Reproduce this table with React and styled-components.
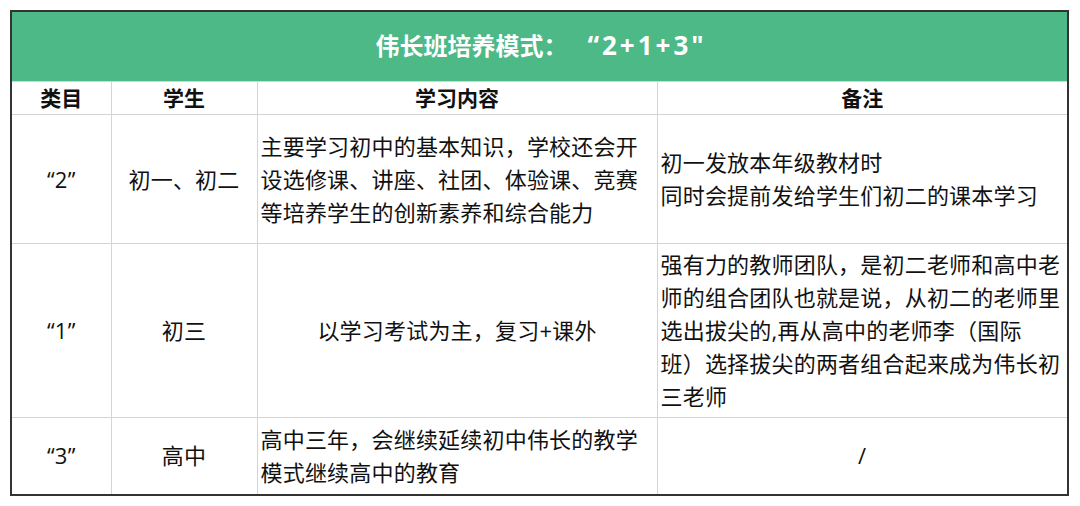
import React from 'react';
import styled, { createGlobalStyle } from 'styled-components';

const GlobalStyle = createGlobalStyle`
  html, body {
    margin: 0;
    padding: 0;
    background: #ffffff;
  }
`;

const Page = styled.div`
  width: 1080px;
  height: 506px;
  padding: 10px 0 0 10px;
  box-sizing: border-box;
  font-family: "Open Sans", "Noto Sans CJK SC", sans-serif;
  color: #111;
`;

const Table = styled.table`
  width: 1059px;
  border-collapse: collapse;
  table-layout: fixed;
  border: 2px solid #333;
`;

const TitleCell = styled.th`
  height: 65px;
  background: #4cb987;
  color: #ffffff;
  font-size: 24px;
  font-weight: 700;
  text-align: center;
  vertical-align: middle;
  padding: 0 0 4px 0;
  border-bottom: 1px solid #d4d4d4;
`;

const TitleNumbers = styled.span`
  font-size: 26px;
  letter-spacing: 3px;
  margin-left: 20px;
  margin-right: -3px;
`;

const HeadCell = styled.th`
  height: 32px;
  font-size: 21px;
  font-weight: 700;
  text-align: center;
  vertical-align: middle;
  padding: 0;
  border: 1px solid #d4d4d4;
  line-height: 30px;
`;

const Row = styled.tr`
  height: ${p => p.$h}px;
`;

const Cell = styled.td`
  font-size: 22px;
  line-height: 33px;
  text-align: ${p => (p.$left ? 'left' : 'center')};
  vertical-align: middle;
  padding: ${p => (p.$left ? '0 2px 0 3px' : '0')};
  border: 1px solid #d4d4d4;
  white-space: nowrap;
  letter-spacing: 0.2px;
`;

const rows = [
  {
    h: 129,
    kind: '“2”',
    who: '初一、初二',
    content: ['主要学习初中的基本知识，学校还会开', '设选修课、讲座、社团、体验课、竞赛', '等培养学生的创新素养和综合能力'],
    contentLeft: true,
    note: ['初一发放本年级教材时', '同时会提前发给学生们初二的课本学习'],
    noteLeft: true,
  },
  {
    h: 174,
    kind: '“1”',
    who: '初三',
    content: ['以学习考试为主，复习+课外'],
    contentLeft: false,
    note: ['强有力的教师团队，是初二老师和高中老', '师的组合团队也就是说，从初二的老师里', '选出拔尖的,再从高中的老师李（国际', '班）选择拔尖的两者组合起来成为伟长初', '三老师'],
    noteLeft: true,
  },
  {
    h: 77,
    kind: '“3”',
    who: '高中',
    content: ['高中三年，会继续延续初中伟长的教学', '模式继续高中的教育'],
    contentLeft: true,
    note: ['/'],
    noteLeft: false,
  },
];

const Lines = ({ items }) =>
  items.map((t, i) => (
    <React.Fragment key={i}>
      {i > 0 && <br />}
      {t}
    </React.Fragment>
  ));

export default function App() {
  return (
    <Page>
      <GlobalStyle />
      <Table>
        <colgroup>
          <col style={{ width: 100 }} />
          <col style={{ width: 146 }} />
          <col style={{ width: 400 }} />
          <col style={{ width: 411 }} />
        </colgroup>
        <thead>
          <tr>
            <TitleCell colSpan={4}>
              伟长班培养模式：<TitleNumbers>“2+1+3"</TitleNumbers>
            </TitleCell>
          </tr>
          <tr>
            <HeadCell>类目</HeadCell>
            <HeadCell>学生</HeadCell>
            <HeadCell>学习内容</HeadCell>
            <HeadCell>备注</HeadCell>
          </tr>
        </thead>
        <tbody>
          {rows.map(r => (
            <Row key={r.kind} $h={r.h}>
              <Cell>{r.kind}</Cell>
              <Cell>{r.who}</Cell>
              <Cell $left={r.contentLeft}>
                <Lines items={r.content} />
              </Cell>
              <Cell $left={r.noteLeft}>
                <Lines items={r.note} />
              </Cell>
            </Row>
          ))}
        </tbody>
      </Table>
    </Page>
  );
}
